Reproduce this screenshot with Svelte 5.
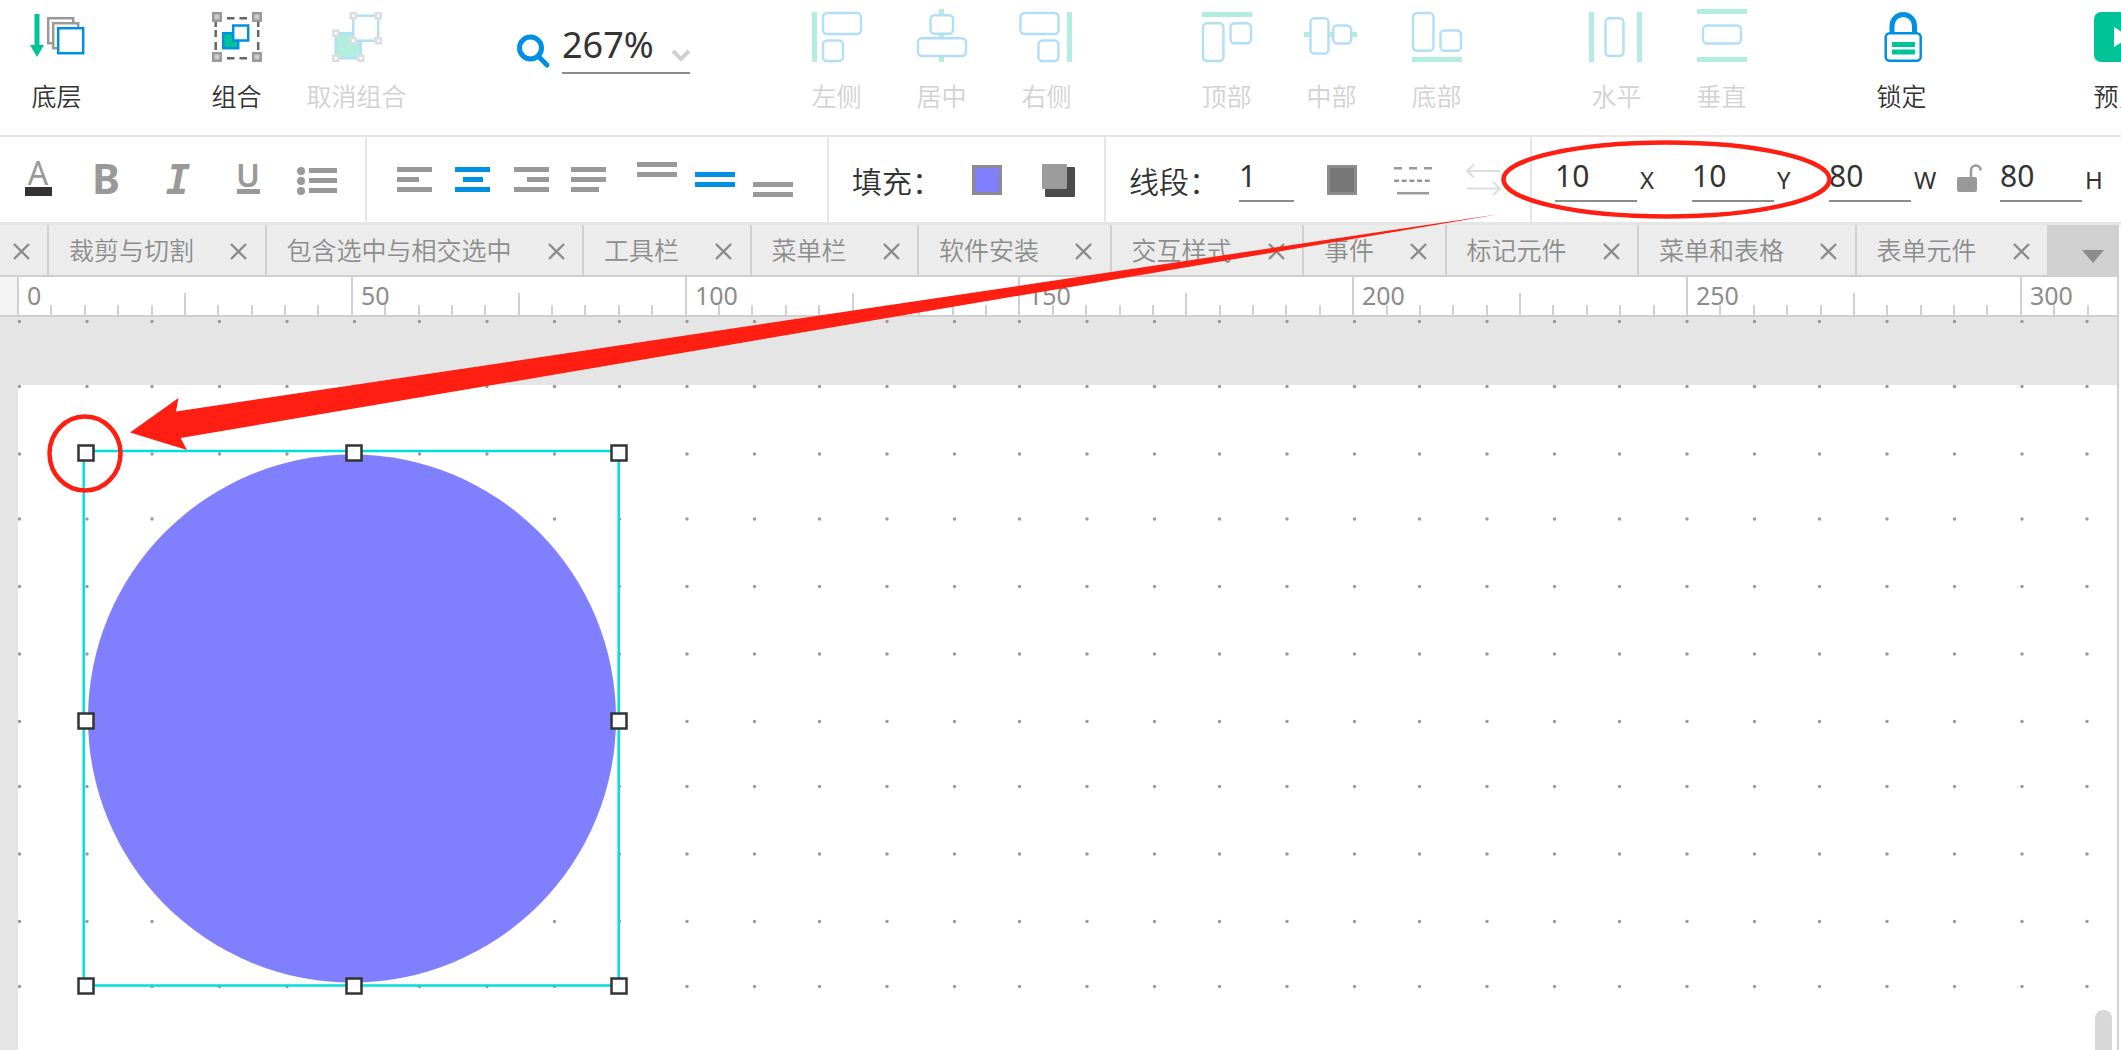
<script lang="ts">
    const tabs = [
        '裁剪与切割',
        '包含选中与相交选中',
        '工具栏',
        '菜单栏',
        '软件安装',
        '交互样式',
        '事件',
        '标记元件',
        '菜单和表格',
        '表单元件',
    ];

    const toolGroups = [
        { gap: 4, tools: [{ id: 'back', label: '底层' }] },
        { gap: 75, tools: [{ id: 'group', label: '组合' }] },
        { gap: 15, tools: [{ id: 'ungroup', label: '取消组合', disabled: true }] },
    ];

    const arrangeGroups = [
        {
            gap: 94,
            tools: [
                { id: 'left', label: '左侧', disabled: true },
                { id: 'center', label: '居中', disabled: true },
                { id: 'right', label: '右侧', disabled: true },
            ],
        },
        {
            gap: 75,
            tools: [
                { id: 'top', label: '顶部', disabled: true },
                { id: 'middle', label: '中部', disabled: true },
                { id: 'bottom', label: '底部', disabled: true },
            ],
        },
        {
            gap: 75,
            tools: [
                { id: 'horizontal', label: '水平', disabled: true },
                { id: 'vertical', label: '垂直', disabled: true },
            ],
        },
        { gap: 75, tools: [{ id: 'lock', label: '锁定' }] },
        { gap: 112, tools: [{ id: 'preview', label: '预览' }] },
    ];

    let zoom = $state('267%');
    let lineWidth = $state('1');
    let x = $state('10');
    let y = $state('10');
    let w = $state('80');
    let h = $state('80');

    // one tick for every 5 units, a label for every 50
    const ticks = Array.from({ length: 63 }, (_, i) => ({
        x: Math.round(17 + i * 33.38),
        value: i * 5,
        top: i % 10 === 0 ? 0 : i % 5 === 0 ? 16 : 28,
    }));

    // grid points snap to steps of 2.5
    const dots: { x: number; y: number }[] = [];
    for (let row = 0; row < 11; row++) {
        for (let col = 0; col < 32; col++) {
            dots.push({
                x: 19 + Math.floor(col * 26.68 + 0.6) * 2.5,
                y: 4 + Math.floor(row * 26.68 - 0.05 + (row === 0 ? 0.1 : 0)) * 2.5,
            });
        }
    }

    const handles = [
        [86, 136], [354, 136], [619, 136],
        [86, 404], [619, 404],
        [86, 669], [354, 669], [619, 669],
    ];
</script>

{#snippet icon(id: string)}
    <svg class="tool-icon" width="50" height="50" viewBox="0 0 50 50" aria-hidden="true">
        {#if id === 'back'}
            <path d="M2.500 2h5v31h4.500L5 45-2 33h4.500z" fill="#00c397" />
            <g fill="#fff" stroke="#999" stroke-width="2.5">
                <rect x="16.200" y="6.200" width="25" height="25" />
                <rect x="21.200" y="11.200" width="25" height="25" />
                <rect x="26.200" y="16.200" width="25" height="25" stroke="#0090e3" />
            </g>
        {:else if id === 'group'}
            <g fill="none" stroke="#666" stroke-width="2.5">
                <path d="M15 6.200h7.500M27.500 6.200H35M15 46.200h7.500M27.500 46.200H35" />
                <path d="M3.700 10v5M3.700 18v7M3.700 30v8M46.200 10v5M46.200 18v7M46.200 30v8" />
            </g>
            <g fill="#ccc" stroke="#999" stroke-width="2.5">
                <rect x="1.200" y="1.200" width="7.500" height="7.500" />
                <rect x="41.200" y="1.200" width="7.500" height="7.500" />
                <rect x="1.200" y="41.200" width="7.500" height="7.500" />
                <rect x="41.200" y="41.200" width="7.500" height="7.500" />
            </g>
            <g stroke="#0090e3" stroke-width="2.5">
                <rect x="11.200" y="21.200" width="15" height="15" fill="#00c397" />
                <rect x="21.200" y="13.500" width="15" height="15" fill="#fff" />
            </g>
        {:else if id === 'ungroup'}
            <g stroke="#b2dff7" stroke-width="2.5">
                <rect x="3.700" y="21.200" width="25" height="25" fill="#b2eddd" />
                <rect x="21.200" y="3.700" width="25" height="25" fill="#fff" />
            </g>
            <g fill="#fff" stroke="#dedede" stroke-width="2.5">
                {#each [[17.5, 0], [42.5, 0], [0, 17.5], [17.5, 25], [42.5, 25], [0, 42.5], [25, 42.5]] as [hx, hy]}
                    <rect x={hx + 1.25} y={hy + 1.25} width="5" height="5" />
                {/each}
            </g>
        {:else if id === 'left'}
            <rect class="bar" width="5" height="50" />
            <rect class="box" x="11" y="1" width="38" height="21" rx="4" />
            <rect class="box" x="11" y="28.500" width="20" height="20.500" rx="4" />
        {:else if id === 'center'}
            <rect class="bar" x="22" y="-3" width="5" height="53" />
            <rect class="box" x="13.500" y="3.200" width="22.500" height="18.500" rx="4" />
            <rect class="box" x="1" y="26.200" width="48" height="17.800" rx="4" />
        {:else if id === 'right'}
            <rect class="bar" x="45" width="5" height="50" />
            <rect class="box" x="-1.500" y="1" width="38" height="21" rx="4" />
            <rect class="box" x="16.500" y="28.500" width="20" height="20.500" rx="4" />
        {:else if id === 'top'}
            <rect class="bar" width="50" height="5" />
            <rect class="box" x="1" y="11.200" width="20.500" height="37.800" rx="4" />
            <rect class="box" x="28.500" y="11.200" width="20.500" height="20" rx="4" />
        {:else if id === 'middle'}
            <rect class="bar" x="-3" y="20" width="53" height="5" />
            <rect class="box" x="3.500" y="6.200" width="18" height="35.300" rx="4" />
            <rect class="box" x="26.200" y="13.500" width="18" height="18" rx="4" />
        {:else if id === 'bottom'}
            <rect class="bar" y="45" width="50" height="5" />
            <rect class="box" x="1" y="1" width="20.500" height="37.800" rx="4" />
            <rect class="box" x="28.500" y="18.500" width="20.500" height="20.300" rx="4" />
        {:else if id === 'horizontal'}
            <rect class="bar" x="-3" width="5" height="50" />
            <rect class="bar" x="45" width="5" height="50" />
            <rect class="box" x="13.500" y="6.200" width="18" height="37.800" rx="4" />
        {:else if id === 'vertical'}
            <rect class="bar" y="-3" width="50" height="5" />
            <rect class="bar" y="45" width="50" height="5" />
            <rect class="box" x="6" y="13.500" width="38" height="18" rx="4" />
        {:else if id === 'lock'}
            <path d="M15 21v-7a11.200 11.500 0 0 1 22.500 0v7" fill="none" stroke="#0090e3" stroke-width="5" />
            <rect x="8.700" y="21.200" width="35" height="27.500" rx="4" fill="#fff" stroke="#0090e3" stroke-width="2.5" />
            <path d="M15 30h23v5H15zM15 37.500h23v5H15z" fill="#00c397" />
        {:else if id === 'preview'}
            <rect width="50" height="50" rx="7" fill="#00c397" />
            <path d="M20 15l16 10-16 10z" fill="#fff" />
        {/if}
    </svg>
{/snippet}

{#snippet toolGroup(group: any)}
    <div class="tool-group" style="margin-left: {group.gap}px">
        {#each group.tools as tool}
            <button class="tool" disabled={tool.disabled}>
                {@render icon(tool.id)}
                <span>{tool.label}</span>
            </button>
        {/each}
    </div>
{/snippet}

<div class="app">
    <header class="toolbar">
        {#each toolGroups as group}
            {@render toolGroup(group)}
        {/each}

        <div class="zoom">
            <svg width="34" height="34" viewBox="0 0 34 34" aria-hidden="true">
                <circle cx="13.500" cy="14" r="11" fill="none" stroke="#0090e3" stroke-width="5" />
                <path d="M21 22l9 9" stroke="#0090e3" stroke-width="5" stroke-linecap="round" />
            </svg>
            <div class="zoom-box">
                <select aria-label="缩放" bind:value={zoom}>
                    <option>100%</option>
                    <option>267%</option>
                </select>
                <svg class="chevron" width="20" height="12" viewBox="0 0 20 12" aria-hidden="true">
                    <path d="M2 2l8 8 8-8" fill="none" stroke="#d0d0d0" stroke-width="4" />
                </svg>
            </div>
        </div>

        {#each arrangeGroups as group}
            {@render toolGroup(group)}
        {/each}
    </header>

    <div class="formatbar">
        <section class="text-style">
            <button aria-label="文字颜色">
                <svg width="40" height="41" viewBox="0 0 40 41">
                    <text x="19" y="26" font-size="32" text-anchor="middle">A</text>
                    <rect x="6" y="28" width="27" height="9" fill="#333" />
                </svg>
            </button>
            <button aria-label="粗体">
                <svg width="40" height="41" viewBox="0 0 40 41">
                    <text x="17" y="35" font-size="42" font-weight="700" text-anchor="middle">B</text>
                </svg>
            </button>
            <button aria-label="斜体">
                <svg width="40" height="41" viewBox="0 0 40 41">
                    <text class="mono" x="19" y="35" font-size="41" text-anchor="middle">I</text>
                </svg>
            </button>
            <button aria-label="下划线">
                <svg width="40" height="41" viewBox="0 0 40 41">
                    <text x="19" y="28" font-size="32" font-weight="600" text-anchor="middle">U</text>
                    <rect x="8" y="30" width="23" height="5" />
                </svg>
            </button>
            <button aria-label="列表">
                <svg width="40" height="41" viewBox="0 0 40 41">
                    <circle cx="2" cy="12" r="4" />
                    <circle cx="2" cy="22" r="4" />
                    <circle cx="2" cy="32" r="4" />
                    <path d="M10 9h28v5H10zM10 19h28v5H10zM10 29h28v5H10z" />
                </svg>
            </button>
        </section>

        <section class="align">
            <div class="halign">
                <button aria-label="左对齐">
                    <svg width="36" height="41" viewBox="0 0 36 41"><path d="M0 8h35v5H0zM0 18h22v5H0zM0 28h35v5H0z" /></svg>
                </button>
                <button class="active" aria-label="居中对齐">
                    <svg width="36" height="41" viewBox="0 0 36 41"><path d="M0 8h35v5H0zM8 18h20v5H8zM0 28h35v5H0z" /></svg>
                </button>
                <button aria-label="右对齐">
                    <svg width="36" height="41" viewBox="0 0 36 41"><path d="M1 8h35v5H1zM14 18h22v5H14zM1 28h35v5H1z" /></svg>
                </button>
                <button aria-label="两端对齐">
                    <svg width="36" height="41" viewBox="0 0 36 41"><path d="M0 8h35v5H0zM0 18h35v5H0zM0 28h28v5H0z" /></svg>
                </button>
            </div>
            <div class="valign">
                <button aria-label="顶端对齐">
                    <svg width="40" height="41" viewBox="0 0 40 41"><path d="M0 3h40v5H0zM0 13h40v5H0z" /></svg>
                </button>
                <button class="active" aria-label="垂直居中">
                    <svg width="40" height="41" viewBox="0 0 40 41"><path d="M0 13h40v5H0zM0 23h40v5H0z" /></svg>
                </button>
                <button aria-label="底端对齐">
                    <svg width="40" height="41" viewBox="0 0 40 41"><path d="M0 23h40v5H0zM0 33h40v5H0z" /></svg>
                </button>
            </div>
        </section>

        <section class="fill">
            <span class="caption">填充：</span>
            <button class="swatch" aria-label="填充颜色"></button>
            <button aria-label="阴影">
                <svg width="33" height="41" viewBox="0 0 33 41">
                    <rect x="3" y="8" width="30" height="30" rx="1" fill="#4c4c4c" />
                    <rect y="5" width="25" height="25" rx="1" fill="#9c9c9c" />
                </svg>
            </button>
        </section>

        <section class="line">
            <label class="caption" for="line-width">线段：</label>
            <input id="line-width" class="number short" bind:value={lineWidth} />
            <button class="swatch dark" aria-label="线段颜色"></button>
            <button class="line-style" aria-label="线段样式">
                <svg width="38" height="41" viewBox="0 0 38 41">
                    <path d="M0 9.200h38" fill="none" stroke="#999" stroke-width="2.5" stroke-dasharray="8 7" />
                    <path d="M0 21.700h36" fill="none" stroke="#999" stroke-width="2.5" stroke-dasharray="5 2.700" />
                    <path d="M3 34.200h32" fill="none" stroke="#999" stroke-width="2.5" />
                </svg>
            </button>
            <button class="line-ends" aria-label="箭头" disabled>
                <svg width="35" height="41" viewBox="0 0 35 41">
                    <path d="M8 5.500L1 12l7 6.500M1 12h33M1 29.500h33M27 23l7 6.500-7 6.500" fill="none" stroke="#ddd" stroke-width="2" />
                </svg>
            </button>
        </section>

        <section class="geometry">
            <div class="field">
                <input id="pos-x" class="number" bind:value={x} />
                <label for="pos-x">X</label>
            </div>
            <div class="field">
                <input id="pos-y" class="number" bind:value={y} />
                <label for="pos-y">Y</label>
            </div>
            <div class="field width">
                <input id="size-w" class="number" bind:value={w} />
                <label for="size-w">W</label>
            </div>
            <button class="ratio" aria-label="锁定比例">
                <svg width="26" height="41" viewBox="0 0 26 41">
                    <rect y="18" width="20" height="15" rx="2" />
                    <path d="M14 19v-7.500a4.800 5 0 0 1 9.600 0" fill="none" stroke="#999" stroke-width="2.5" />
                </svg>
            </button>
            <div class="field">
                <input id="size-h" class="number" bind:value={h} />
                <label for="size-h">H</label>
            </div>
        </section>
    </div>

    {#snippet closeButton()}
        <button class="close" aria-label="关闭">
            <svg width="17" height="17" viewBox="0 0 17 17"><path d="M1 1l15 15M16 1L1 16" fill="none" stroke="#8c8c8c" stroke-width="2.4" /></svg>
        </button>
    {/snippet}

    <nav class="tabs">
        <div class="tab first">{@render closeButton()}</div>
        {#each tabs as tab}
            <div class="tab">
                <button class="tab-name">{tab}</button>
                {@render closeButton()}
            </div>
        {/each}
        <button class="tab-menu" aria-label="更多标签">
            <svg width="22" height="13" viewBox="0 0 22 13"><path d="M0 0h22L11 13z" fill="#8c8c8c" /></svg>
        </button>
    </nav>

    <main class="workspace">
        <svg class="ruler" width="100%" height="38">
            <rect width="17" height="38" fill="#f4f4f4" />
            {#each ticks as tick}
                <rect x={tick.x} y={tick.top} width="2" height={38 - tick.top} fill="#d0d0d0" />
                {#if tick.value % 50 === 0}
                    <text x={tick.x + 10} y="28">{tick.value}</text>
                {/if}
            {/each}
        </svg>

        <div class="canvas">
            <svg class="board" width="100%" height="100%">
                <rect x="18" y="68" width="100%" height="100%" fill="#fff" />
                {#each dots as dot}
                    <circle cx={dot.x + 0.5} cy={dot.y + 0.5} r="1.700" fill="#999" />
                {/each}
                <circle cx="352" cy="401.500" r="264" fill="#8080ff" />
                <rect x="83.700" y="134" width="535" height="534.500" fill="none" stroke="#00e0db" stroke-width="2.5" />
                {#each handles as [hx, hy]}
                    <rect x={hx - 7.5} y={hy - 7.5} width="15" height="15" fill="#fff" stroke="#333" stroke-width="2.5" />
                {/each}
            </svg>
            <div class="scrollbar"></div>
        </div>
    </main>

    <svg class="annotations" width="100%" height="100%" aria-hidden="true">
        <g fill="none" stroke="#ff1f12" stroke-width="4.5">
            <ellipse cx="1666.500" cy="179.500" rx="163" ry="37" />
            <ellipse cx="85" cy="453.500" rx="35.500" ry="37" />
        </g>
        <path d="M130 432.500L178.500 398l-2.500 13.500L1500 214 180.500 438l6.500 12z" fill="#ff1f12" />
    </svg>
</div>

<style>
    :global(body) {
        margin: 0;
    }

    .app {
        position: relative;
        display: flex;
        flex-direction: column;
        min-height: 100vh;
        overflow: hidden;
        background: #fff;
        color: #333;
        font-family: "Noto Sans", "Noto Sans CJK SC", sans-serif;
    }

    button {
        padding: 0;
        border: none;
        background: none;
        color: inherit;
        font: inherit;
        cursor: pointer;
    }

    svg {
        display: block;
        flex: none;
        overflow: visible;
    }

    /* top toolbar */
    .toolbar {
        display: flex;
        height: 135px;
        border-bottom: 2px solid #e6e6e6;
    }

    .tool-group {
        display: flex;
        flex: none;
    }

    .tool {
        display: flex;
        flex-direction: column;
        align-items: center;
        gap: 18px;
        width: 105px;
        padding-top: 12px;
        font-family: "Noto Sans CJK SC", sans-serif;
        font-size: 25px;
        font-weight: 350;
        line-height: 30px;
        white-space: nowrap;
    }

    .tool:disabled {
        color: #d2d2d2;
    }

    .bar {
        fill: #b2eddd;
    }

    .box {
        fill: #fff;
        stroke: #b2dff7;
        stroke-width: 2.4px;
    }

    .zoom {
        display: flex;
        flex: none;
        gap: 11px;
        margin-left: 108px;
        padding-top: 34px;
    }

    .zoom-box {
        position: relative;
        width: 128px;
        height: 43px;
        border-bottom: 2px solid #8c8c8c;
        margin-top: -5px;
    }

    .zoom-box select {
        width: 100%;
        height: 32px;
        padding: 0;
        border: none;
        appearance: none;
        background: none;
        color: #333;
        font-family: "Noto Sans", sans-serif;
        font-size: 36px;
        line-height: 32px;
        overflow: visible;
    }

    .chevron {
        position: absolute;
        right: -1px;
        top: 20px;
        pointer-events: none;
    }

    /* format bar */
    .formatbar {
        display: flex;
        height: 85px;
        border-bottom: 3px solid #e6e6e6;
        fill: #999;
    }

    .formatbar section {
        display: flex;
        flex: none;
        align-items: center;
        box-sizing: border-box;
        border-right: 2px solid #e6e6e6;
    }

    .formatbar .text-style {
        gap: 30px;
        width: 367px;
        padding-left: 19px;
    }

    .mono {
        font-family: "DejaVu Sans Mono", monospace;
        font-weight: 700;
        font-style: italic;
    }

    .formatbar .align {
        gap: 30px;
        width: 462px;
        padding-left: 30px;
    }

    .halign {
        display: flex;
        gap: 22px;
    }

    .valign {
        display: flex;
        gap: 18px;
    }

    .active {
        fill: #0090e3;
    }

    .formatbar .fill {
        gap: 40px;
        width: 277px;
        padding-left: 23px;
    }

    .caption {
        width: 80px;
        font-family: "Noto Sans CJK SC", sans-serif;
        font-size: 30px;
        font-weight: 350;
        line-height: 40px;
        white-space: nowrap;
    }

    .swatch {
        box-sizing: border-box;
        width: 30px;
        height: 30px;
        border: 3px solid #8c8c8c;
        background: #8080ff;
    }

    .swatch.dark {
        background: #777;
    }

    .formatbar .line {
        width: 426px;
        padding-left: 23px;
    }

    .line .swatch {
        margin-left: 33px;
    }

    .line-style {
        margin-left: 37px;
    }

    .line-ends {
        margin-left: 34px;
    }

    .number {
        box-sizing: border-box;
        width: 82px;
        height: 44px;
        padding: 0 0 6px;
        border: none;
        border-bottom: 2px solid #8c8c8c;
        border-radius: 0;
        background: none;
        color: #333;
        font-family: "Noto Sans", sans-serif;
        font-size: 30px;
        outline: none;
    }

    .number.short {
        width: 55px;
        margin-left: 30px;
    }

    .formatbar .geometry {
        padding-left: 23px;
        border-right: none;
    }

    .field {
        display: flex;
        align-items: center;
        gap: 3px;
        width: 137px;
    }

    .field.width {
        width: 128px;
    }

    .field label {
        font-size: 24px;
        line-height: 30px;
    }

    .ratio {
        margin-right: 17px;
    }

    /* page tabs */
    .tabs {
        display: flex;
        height: 50px;
        margin-right: 2px;
        border-bottom: 2px solid #d0d0d0;
        background: #ececec;
    }

    .tab {
        display: flex;
        flex: 1 0 auto;
        align-items: center;
        gap: 36px;
        padding: 0 17px 0 20px;
        border-right: 2px solid #d0d0d0;
    }

    .tab.first {
        flex-grow: 0;
        padding-left: 13px;
    }

    .tab-name {
        padding-bottom: 3px;
        color: #8c8c8c;
        font-family: "Noto Sans CJK SC", sans-serif;
        font-size: 25px;
        font-weight: 350;
        line-height: 30px;
        white-space: nowrap;
    }

    .close {
        padding-top: 3px;
    }

    .tab-menu {
        display: flex;
        flex: none;
        align-items: center;
        justify-content: flex-end;
        width: 70px;
        padding: 12px 15px 0 0;
        background: #d0d0d0;
    }

    /* ruler and canvas */
    .workspace {
        display: flex;
        flex: 1;
        flex-direction: column;
        margin-right: 2px;
        border-right: 2px solid #d0d0d0;
    }

    .ruler {
        overflow: hidden;
        border-bottom: 2px solid #d0d0d0;
        background: #fff;
    }

    .ruler text {
        fill: #8c8c8c;
        font-size: 25px;
    }

    .canvas {
        position: relative;
        display: flex;
        flex: 1;
        background: #e5e5e5;
    }

    .board {
        overflow: hidden;
        height: auto;
        min-height: 733px;
    }

    .scrollbar {
        position: absolute;
        right: 5px;
        bottom: 0;
        width: 17px;
        height: 40px;
        border-radius: 8px 8px 0 0;
        background: #d8d8d8;
    }

    .annotations {
        position: absolute;
        inset: 0;
        pointer-events: none;
    }
</style>
